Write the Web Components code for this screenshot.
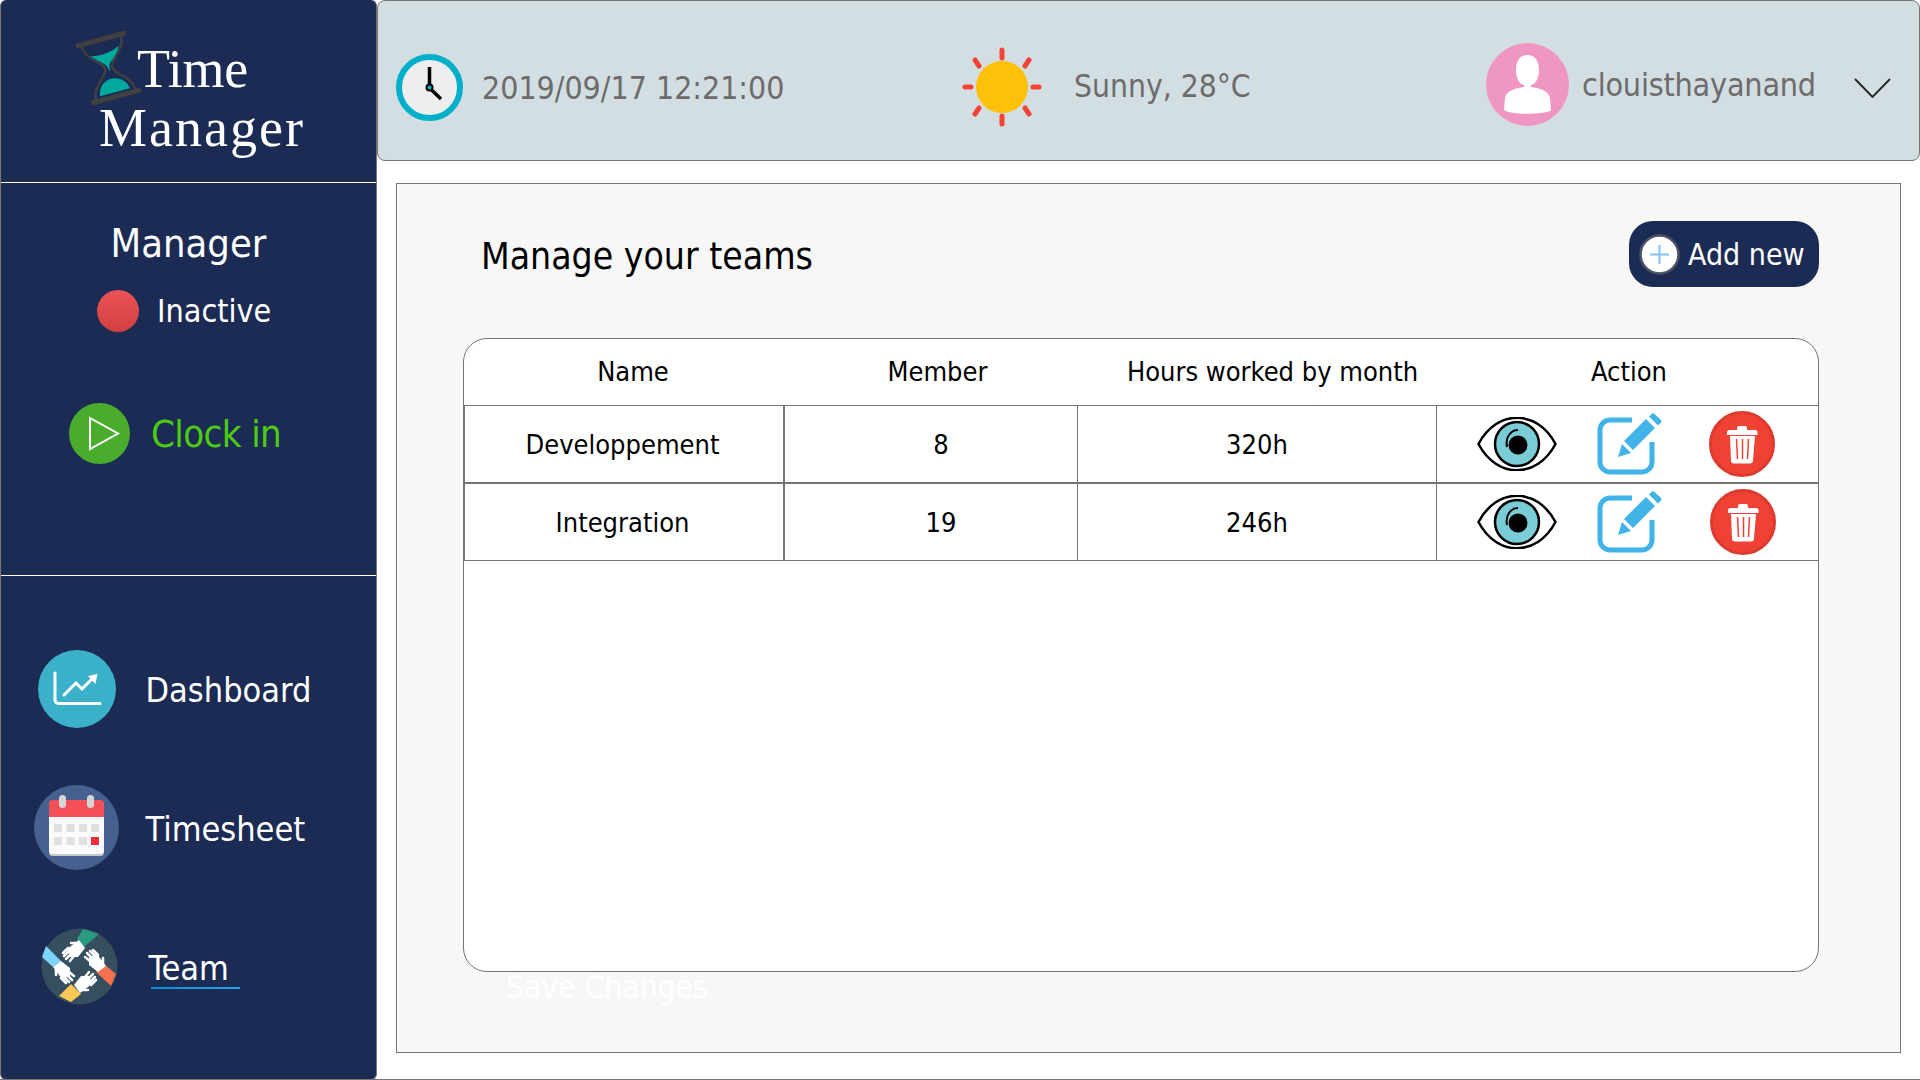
<!DOCTYPE html>
<html>
<head>
<meta charset="utf-8">
<title>Time Manager</title>
<style>
  html, body { margin: 0; padding: 0; background: #fff; }
  body { font-family: "DejaVu Sans", "Liberation Sans", sans-serif; font-stretch: condensed; overflow: hidden; }
</style>
</head>
<body>
<tm-app>
  <tm-sidebar slot="side">
    <tm-nav-item label="Dashboard">
      <svg slot="icon" width="78" height="78" viewBox="0 0 78 78" style="margin-left:1px">
        <circle cx="39" cy="39" r="39" fill="#3bb0c9"/>
        <path d="M17 23V50a3.500 3.500 0 0 0 3.500 3.500H62" fill="none" stroke="#fff" stroke-width="3" stroke-linecap="round"/>
        <path d="M26 45L38 33L44 39L56 27" fill="none" stroke="#fff" stroke-width="3" stroke-linecap="round"/>
        <path d="M50 26L59.500 24L57.500 34Z" fill="#fff"/>
      </svg>
    </tm-nav-item>
    <tm-nav-item label="Timesheet">
      <svg slot="icon" width="85" height="85" viewBox="0 0 85 85">
        <circle cx="42.500" cy="42.500" r="42.500" fill="#46608f"/>
        <path d="M15 32H70V66a4 4 0 0 1-4 4H19a4 4 0 0 1-4-4Z" fill="#fbfbfb"/>
        <path d="M15 69h55a4 4 0 0 1-4 2H19a4 4 0 0 1-4-2Z" fill="#c8c8c8"/>
        <path d="M19 15H66a4 4 0 0 1 4 4V32H15V19a4 4 0 0 1 4-4Z" fill="#f54f5a"/>
        <rect x="25" y="10" width="7" height="13" rx="3.500" fill="#d6d6d6"/>
        <rect x="53" y="10" width="7" height="13" rx="3.500" fill="#d6d6d6"/>
        <g fill="#e0e0e0">
          <rect x="20" y="39" width="8" height="8"/><rect x="32.500" y="39" width="8" height="8"/>
          <rect x="45" y="39" width="8" height="8"/><rect x="57" y="39" width="8" height="8"/>
          <rect x="20" y="52" width="8" height="8"/><rect x="32.500" y="52" width="8" height="8"/>
          <rect x="45" y="52" width="8" height="8"/>
        </g>
        <rect x="57" y="52" width="8" height="8" fill="#ec2f3d"/>
      </svg>
    </tm-nav-item>
    <tm-nav-item label="Team" current>
      <svg slot="icon" width="77" height="77" viewBox="0 0 77 77" style="margin-left:6px">
        <defs>
          <g id="hand">
            <path d="M38 12L44 20L37 29L29 29L26 21Z" fill="#fff"/>
            <g stroke="#fff" stroke-width="2.500" stroke-linecap="round">
              <path d="M27 20L22 25M28 23L23 28M30 26L25 31M33 28L29 33M37 15L30 15"/>
            </g>
          </g>
        </defs>
        <circle cx="38.500" cy="38.500" r="38" fill="#354f5e"/>
        <path d="M42 1L58 6L43 19L36 11Z" fill="#2a9a80"/>
        <path d="M5 18L20 33L12 39L1 29Z" fill="#7ed4fb"/>
        <path d="M63 36L75 46L70 58L55 44Z" fill="#f4704f"/>
        <path d="M30 56L40 66L30 74L18 68Z" fill="#fdc757"/>
        <use href="#hand"/>
        <use href="#hand" transform="rotate(90 38.500 38.500)"/>
        <use href="#hand" transform="rotate(180 38.500 38.500)"/>
        <use href="#hand" transform="rotate(270 38.500 38.500)"/>
      </svg>
    </tm-nav-item>
  </tm-sidebar>
  <tm-topbar slot="top"></tm-topbar>
  <tm-panel slot="main" heading="Manage your teams">
    <tm-add-button slot="action">Add new</tm-add-button>
    <tm-team-table>
      <tm-team-row name="Developpement" members="8" hours="320h"></tm-team-row>
      <tm-team-row name="Integration" members="19" hours="246h"></tm-team-row>
    </tm-team-table>
  </tm-panel>
</tm-app>

<script>
class TmApp extends HTMLElement {
  constructor() {
    super();
    this.attachShadow({ mode: "open" }).innerHTML = `
<style>
  :host { display: flex; width: 1920px; height: 1080px; box-sizing: border-box; border-bottom: 1px solid #757575; }
  .right { flex: 1; display: flex; flex-direction: column; min-width: 0; }
</style>
<slot name="side"></slot>
<div class="right">
  <slot name="top"></slot>
  <slot name="main"></slot>
</div>`;
  }
}

class TmSidebar extends HTMLElement {
  constructor() {
    super();
    this.attachShadow({ mode: "open" }).innerHTML = `
<style>
  :host { display: flex; flex-direction: column; width: 377px; height: 1080px; box-sizing: border-box; background: #1c2b53; color: #fff; border: 1px solid #757575; border-width: 0 1px 1px 1px; border-radius: 6px; flex: none; }
  .logo { height: 183px; box-sizing: border-box; border-bottom: 1px solid #fff; padding: 30px 0 0 74px; font-family: "Liberation Serif", serif; font-size: 54px; line-height: 58px; }
  .logo .first { display: flex; height: 75px; }
  .logo .time { margin: 10px 0 0 -5px; letter-spacing: -0.300px; }
  .logo .mgr { margin: -6px 0 0 24px; letter-spacing: 2px; }
  .status { height: 393px; box-sizing: border-box; border-bottom: 1px solid #fff; display: flex; flex-direction: column; }
  .role { text-align: center; font-size: 39.500px; line-height: 48px; margin-top: 36px; }
  .state { display: flex; align-items: center; font-size: 32px; line-height: 42px; padding-left: 96px; margin-top: 22px; }
  .state span:last-child { padding-top: 1px; }
  .dot { width: 42px; height: 42px; border-radius: 50%; background: linear-gradient(#ea5357, #d33f42); margin-right: 18px; }
  .clock { display: flex; align-items: center; padding-left: 68px; margin-top: 71px; font-size: 38px; letter-spacing: -0.600px; color: #4bcb12; }
  .clock svg { margin-right: 21px; }
  nav { padding-top: 43px; display: flex; flex-direction: column; }
</style>
<div class="logo">
  <div class="first">
    <svg width="67" height="75" viewBox="0 0 67 75">
      <g transform="rotate(-15 33.500 38)">
        <path d="M13 9C13 25 30 30 30 38C30 46 13 51 13 67M54 9C54 25 37 30 37 38C37 46 54 51 54 67" fill="none" stroke="#404040" stroke-width="2.500"/>
        <rect x="7.500" y="6" width="52" height="5" rx="2.500" fill="#404040"/>
        <rect x="7.500" y="65" width="52" height="5" rx="2.500" fill="#404040"/>
        <path d="M19 22C26 24 40 24 49 19C46 27 38 31 35 35L34 42L32 35C29 31 23 27 19 22Z" fill="#00a99d"/>
        <path d="M18 63C20 52 28 49 33 49C40 49 48 54 49 63Z" fill="#00a99d"/>
      </g>
    </svg>
    <span class="time">Time</span>
  </div>
  <div class="mgr">Manager</div>
</div>
<div class="status">
  <div class="role">Manager</div>
  <div class="state"><span class="dot"></span><span>Inactive</span></div>
  <div class="clock">
    <svg width="61" height="61" viewBox="0 0 61 61">
      <circle cx="30.500" cy="30.500" r="30.500" fill="#49ac2c"/>
      <path d="M21 15L49 30.500L21 46Z" fill="none" stroke="#fff" stroke-width="2"/>
    </svg>
    <span>Clock in</span>
  </div>
</div>
<nav><slot></slot></nav>`;
  }
}

class TmNavItem extends HTMLElement {
  constructor() {
    super();
    this.attachShadow({ mode: "open" }).innerHTML = `
<style>
  :host { display: flex; align-items: center; height: 139px; font-size: 34px; color: #fff; }
  .icon { width: 144.500px; box-sizing: border-box; padding-left: 7px; display: flex; justify-content: center; flex: none; }
  .label { position: relative; padding-top: 3px; }
  :host([current]) .label { margin-left: 3px; padding-top: 2px; }
  :host([current]) .label::after { content: ""; position: absolute; left: 2px; width: 89px; bottom: -1px; height: 2px; background: linear-gradient(90deg, #0a8fd6, #23a6e8); }
</style>
<div class="icon"><slot name="icon"></slot></div>
<span class="label"></span>`;
    this.shadowRoot.querySelector(".label").textContent = this.getAttribute("label");
  }
}

class TmTopbar extends HTMLElement {
  constructor() {
    super();
    this.attachShadow({ mode: "open" }).innerHTML = `
<style>
  :host { display: flex; align-items: center; height: 161px; box-sizing: border-box; background: #d3dee3; border: 1px solid #757575; border-radius: 8px; color: #6d6b6b; font-size: 31.800px; padding-left: 18px; flex: none; }
  .block { display: flex; align-items: center; }
  .clock { width: 566px; flex: none; padding-top: 13px; }
  .clock svg { margin-right: 19px; flex: none; }
  .weather { width: 524px; flex: none; padding-top: 12px; font-size: 31.500px; }
  .weather svg { margin-right: 32px; flex: none; }
  .weather span { margin-top: -2px; }
  .user { padding-top: 8px; font-size: 32px; letter-spacing: -0.200px; }
  .user .avatar { margin-right: 13px; flex: none; }
  .user .chev { margin-left: 38px; margin-top: 6px; flex: none; }
</style>
<div class="block clock">
  <svg width="67" height="67" viewBox="0 0 67 67">
    <circle cx="33.500" cy="33.500" r="30.500" fill="#eee" stroke="#00afc9" stroke-width="6"/>
    <path d="M33.500 13V34L45 45" fill="none" stroke="#000" stroke-width="3.500"/>
    <circle cx="33.500" cy="33.500" r="4" fill="#000"/>
    <circle cx="33.500" cy="33.500" r="2" fill="#00afc9"/>
  </svg>
  <span>2019/09/17 12:21:00</span>
</div>
<div class="block weather">
  <svg width="80" height="80" viewBox="0 0 80 80">
    <circle cx="40" cy="40" r="26" fill="#ffc107"/>
    <g stroke="#f44336" stroke-width="5" stroke-linecap="round">
      <path d="M40 3V11M40 69V77M3 40H9M71 40H77M13 13L17 19M67 13L63 19M13 67L17 61M67 67L63 61"/>
    </g>
  </svg>
  <span>Sunny, 28°C</span>
</div>
<div class="block user">
  <svg class="avatar" width="83" height="83" viewBox="0 0 83 83">
    <circle cx="41.500" cy="41.500" r="41.500" fill="#ef97c2"/>
    <path d="M41.500 12C35 12 30 17 30 27C30 37 35 42 38 42V44C30 45 20 48 19 55L18 67C24 72 60 72 65 67L64 55C63 48 53 45 45 44V42C48 42 53 37 53 27C53 17 48 12 41.500 12Z" fill="#fff"/>
  </svg>
  <span>clouisthayanand</span>
  <svg class="chev" width="37" height="20" viewBox="0 0 37 20">
    <path d="M1 1L18.500 19L36 1" fill="none" stroke="#222" stroke-width="1.800"/>
  </svg>
</div>`;
  }
}

class TmPanel extends HTMLElement {
  constructor() {
    super();
    this.attachShadow({ mode: "open" }).innerHTML = `
<style>
  :host { display: block; margin: 22px 19px 0 19px; height: 870px; box-sizing: border-box; background: #f7f7f7; border: 1px solid #757575; padding: 37px 81px 0 66px; color: #000; }
  .head { display: flex; justify-content: space-between; align-items: center; height: 66px; padding-left: 18px; margin-bottom: 51px; }
  h2 { margin: 0; font-size: 37px; font-weight: normal; padding-top: 4px; }
  .ghost { color: #fff; font-size: 31.500px; line-height: 30px; margin: 0 0 0 43px; }
</style>
<div class="head"><h2></h2><slot name="action"></slot></div>
<slot></slot>
<div class="ghost">Save Changes</div>`;
    this.shadowRoot.querySelector("h2").textContent = this.getAttribute("heading");
  }
}

class TmAddButton extends HTMLElement {
  constructor() {
    super();
    this.attachShadow({ mode: "open" }).innerHTML = `
<style>
  :host { display: flex; align-items: center; width: 190px; height: 66px; box-sizing: border-box; background: #1c2b53; border-radius: 24px; color: #fff; font-size: 30px; padding-left: 10px; }
  svg { margin-right: 8px; flex: none; }
</style>
<svg width="41" height="41" viewBox="0 0 41 41">
  <circle cx="20.500" cy="20.500" r="19" fill="#fff" stroke="#4a5266" stroke-width="2.500"/>
  <path d="M20.500 11V30M11 20.500H30" stroke="#7cc4f5" stroke-width="2"/>
</svg>
<span><slot></slot></span>`;
  }
}

class TmTeamTable extends HTMLElement {
  constructor() {
    super();
    this.attachShadow({ mode: "open" }).innerHTML = `
<style>
  :host { display: block; height: 634px; box-sizing: border-box; background: #fff; border: 1px solid #757575; border-radius: 24px; font-size: 27px; color: #000; overflow: hidden; }
  .header { display: grid; grid-template-columns: 320px 293px 359px 1fr; height: 67px; box-sizing: border-box; padding-bottom: 2px; align-items: center; text-align: center; border-bottom: 1px solid #757575; }
  .header div:nth-child(1) { padding-left: 18px; }
  .header div:nth-child(2) { padding-left: 14px; }
  .header div:nth-child(3) { padding-left: 32px; }
  .header div:nth-child(4) { padding-left: 4px; }
  ::slotted(:first-child) { height: 78px; border-bottom-width: 2px; }
</style>
<div class="header"><div>Name</div><div>Member</div><div>Hours worked by month</div><div>Action</div></div>
<slot></slot>`;
  }
}

class TmTeamRow extends HTMLElement {
  constructor() {
    super();
    this.attachShadow({ mode: "open" }).innerHTML = `
<style>
  :host { display: grid; grid-template-columns: 320px 293px 359px 1fr; height: 77px; box-sizing: border-box; border-bottom: 1px solid #757575; }
  .cell { display: flex; align-items: center; justify-content: center; border-left: 1px solid #757575; }
  .cell:first-child { border-left: 0; }
  .name { padding-right: 4px; }
  .num { padding-left: 20px; border-left-width: 2px; margin-left: -1px; }
  .hours { padding-top: 1px; }
  .actions { justify-content: flex-start; padding-left: 40px; }
  .eye { margin-right: 40px; }
  .edit { margin-right: 47px; }
  :host(:last-child) .trash { margin-left: 1px; }
</style>
<div class="cell name"></div>
<div class="cell num"></div>
<div class="cell hours"></div>
<div class="cell actions">
  <svg class="eye" width="80" height="54" viewBox="0 0 80 54">
    <path d="M1.500 27C20-8 60-8 78.500 27C60 62 20 62 1.500 27Z" fill="#fff" stroke="#000" stroke-width="2.500"/>
    <circle cx="40" cy="27" r="22" fill="#7accd6" stroke="#000" stroke-width="2.500"/>
    <circle cx="41" cy="28" r="9.500" fill="#000"/>
    <path d="M30 30C28 20 34 13 41 13" fill="none" stroke="#000" stroke-width="2"/>
  </svg>
  <svg class="edit" width="65" height="62" viewBox="0 0 65 62">
    <path d="M35 7H13a10 10 0 0 0-10 10V49a10 10 0 0 0 10 10H45a10 10 0 0 0 10-10V29" fill="none" stroke="#42b3e9" stroke-width="5"/>
    <path d="M21 44L25 31L34 40Z" fill="#42b3e9"/>
    <path d="M27 28L49 6L58 15L36 37Z" fill="#42b3e9"/>
    <path d="M52 3.500L55 .5Q56 0 57 .5L64 7Q65 8 64 9.500L61 12.500Z" fill="#42b3e9"/>
  </svg>
  <svg class="trash" width="66" height="66" viewBox="0 0 66 66">
    <circle cx="33" cy="33" r="31.500" fill="#f04135" stroke="#dd3a30" stroke-width="3"/>
    <path d="M28 19V17a2 2 0 0 1 2-2H36a2 2 0 0 1 2 2V19H46a2.500 2.500 0 0 1 2.500 2.500V24H18V21.500A2.500 2.500 0 0 1 20.500 19Z" fill="#fff"/>
    <path d="M21 25H46L44 49.500a3 3 0 0 1-3 3H25a3 3 0 0 1-3-3Z" fill="#fff"/>
    <path d="M27.500 28L28.500 48M33.500 28V48M39.500 28L38.500 48" stroke="#f04135" stroke-width="1.500"/>
  </svg>
</div>`;
    const s = this.shadowRoot;
    s.querySelector(".name").textContent = this.getAttribute("name");
    s.querySelector(".num").textContent = this.getAttribute("members");
    s.querySelector(".hours").textContent = this.getAttribute("hours");
  }
}

customElements.define("tm-app", TmApp);
customElements.define("tm-sidebar", TmSidebar);
customElements.define("tm-nav-item", TmNavItem);
customElements.define("tm-topbar", TmTopbar);
customElements.define("tm-panel", TmPanel);
customElements.define("tm-add-button", TmAddButton);
customElements.define("tm-team-table", TmTeamTable);
customElements.define("tm-team-row", TmTeamRow);
</script>
</body>
</html>
